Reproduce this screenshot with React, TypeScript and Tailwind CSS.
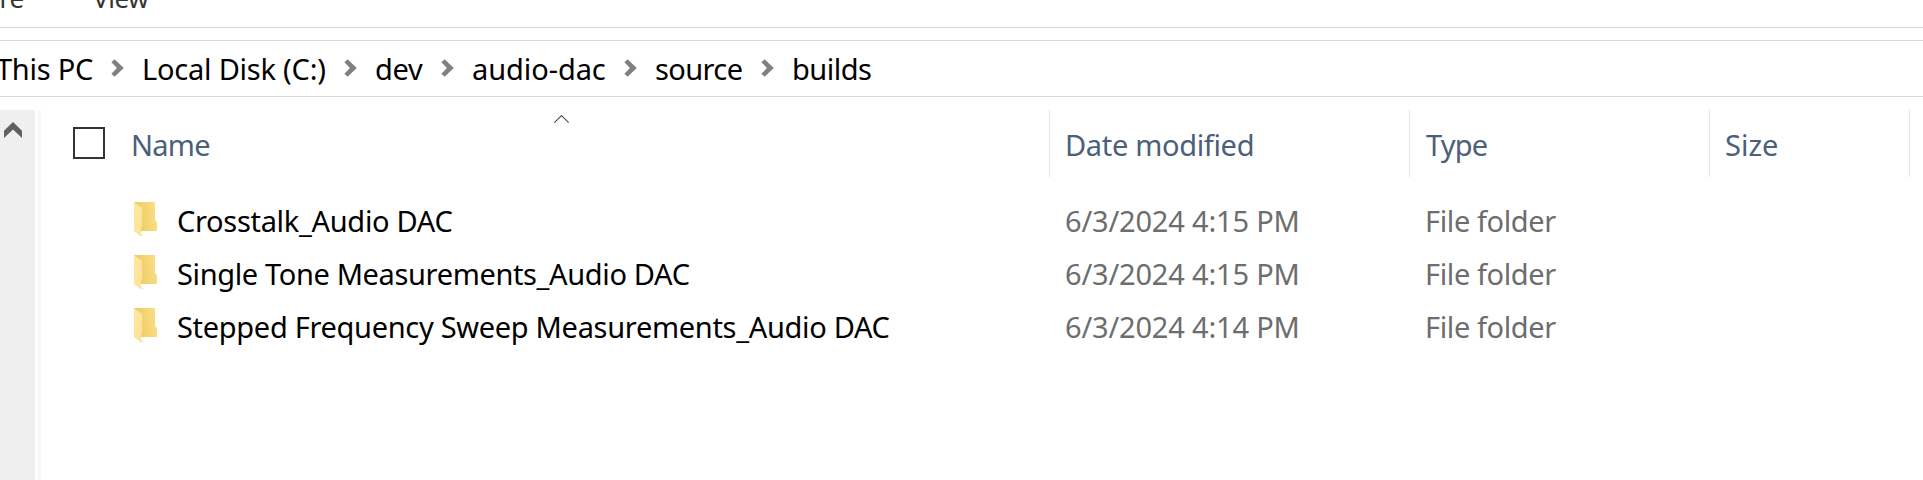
const crumbs = [
  { label: "This PC", box: "w-[115px] tracking-[-0.25px]" },
  { label: "Local Disk (C:)", box: "w-[202px] tracking-[-0.22px]" },
  { label: "dev", box: "w-[66px] tracking-[-0.3px]" },
  { label: "audio-dac", box: "w-[152px] tracking-[-0.08px]" },
  { label: "source", box: "w-[106px] tracking-[-0.6px]" },
  { label: "builds", box: "tracking-[-0.52px]" },
];

const rows = [
  { name: "Crosstalk_Audio DAC", spacing: "tracking-[-0.31px]", date: "6/3/2024 4:15 PM" },
  { name: "Single Tone Measurements_Audio DAC", spacing: "tracking-[-0.36px]", date: "6/3/2024 4:15 PM" },
  { name: "Stepped Frequency Sweep Measurements_Audio DAC", spacing: "tracking-[-0.31px]", date: "6/3/2024 4:14 PM" },
];

function CrumbArrow() {
  return (
    <svg className="h-[18px] w-[31px] shrink-0" viewBox="0 0 31 18">
      <path d="M0.4 3.2L3.6 0.2L12.8 9L3.6 17.8L0.4 14.8L5.9 9Z" fill="#808080" />
    </svg>
  );
}

function FolderIcon() {
  return (
    <svg className="h-[35px] w-6 shrink-0" viewBox="0 0 24 35">
      <defs>
        <linearGradient id="folder-back" x1="0" x2="1" y1="0.2" y2="0">
          <stop offset="0" stopColor="#ecca63" />
          <stop offset="1" stopColor="#fde087" />
        </linearGradient>
        <linearGradient id="folder-front" x1="0" x2="0.5" y1="0" y2="1">
          <stop offset="0" stopColor="#ffe8a4" />
          <stop offset="1" stopColor="#fee397" />
        </linearGradient>
      </defs>
      <path d="M7 34.6L11 33.6L7 32Z" fill="#f1ece0" />
      <path d="M0 0H21V18L23 20V29H0Z" fill="url(#folder-back)" />
      <path d="M0 0.3L8 6V25.5L7 26V34.5L0 29Z" fill="url(#folder-front)" />
    </svg>
  );
}

export default function App() {
  return (
    <div className="flex h-[480px] w-full flex-col overflow-hidden bg-white font-['Noto_Sans',sans-serif] text-[29px] whitespace-pre text-black">
      <div className="flex h-7 shrink-0 border-b border-[#d9d9d9] text-[26px] leading-[36px] text-[#333]">
        <div className="-mt-5 flex w-6 shrink-0 justify-end tracking-[-0.2px]">Share</div>
        <div className="-mt-5 pl-[69px] tracking-[-0.4px]">View</div>
      </div>

      <div className="mt-3 flex h-[57px] shrink-0 border-y border-[#d9d9d9] leading-[55px]">
        <div className="-ml-1 flex">
          {crumbs.map((c, i) => (
            <div key={c.label} className="flex">
              <span className={c.box}>{c.label}</span>
              {i < crumbs.length - 1 && (
                <div className="pt-[17.5px]">
                  <CrumbArrow />
                </div>
              )}
            </div>
          ))}
        </div>
      </div>

      <div className="mt-[13px] flex min-h-0 flex-1">
        <div className="w-[35px] shrink-0 bg-[#efefef] pt-3 pl-1">
          <svg className="h-4 w-[18px]" viewBox="0 0 18 16">
            <path d="M9 0L18 8.8V16L9 7.4L0 16V8.8Z" fill="#606060" />
          </svg>
        </div>
        <div className="ml-[3px] w-[3px] shrink-0 bg-[#f7f7f7]" />

        <div className="flex min-w-0 flex-1 flex-col">
          <div className="flex h-[67px] shrink-0 leading-[69px] text-[#4c607a]">
            <div className="relative flex w-[1009px] shrink-0 border-r border-[#e5e5e5] pl-8">
              <div className="mt-[17px] size-8 border-2 border-[#333]" />
              <span className="ml-[26px] tracking-[-0.75px]">Name</span>
              <svg className="absolute top-[5px] left-[513px] h-2 w-[15px]" viewBox="0 0 15 8">
                <path d="M0.3 7.6L7.5 0.7L14.7 7.6" fill="none" stroke="#444" strokeWidth="1.1" />
              </svg>
            </div>
            <div className="w-[360px] shrink-0 border-r border-[#e5e5e5] pl-[15px] tracking-[-0.33px]">Date modified</div>
            <div className="w-[300px] shrink-0 border-r border-[#e5e5e5] pl-4 tracking-[-0.8px]">Type</div>
            <div className="w-[200px] shrink-0 border-r border-[#e5e5e5] pl-[15px]">Size</div>
          </div>

          <div className="mt-[17px] flex flex-col">
            {rows.map((r) => (
              <div key={r.name} className="flex h-[53px] leading-[53px] text-[#6d6d6d]">
                <div className="flex w-[1024px] shrink-0 pl-[93px] text-black">
                  <div className="pt-2">
                    <FolderIcon />
                  </div>
                  <span className={`ml-[19px] ${r.spacing}`}>{r.name}</span>
                </div>
                <div className="w-[360px] shrink-0 tracking-[-0.18px]">{r.date}</div>
                <div className="tracking-[-0.38px]">File folder</div>
              </div>
            ))}
          </div>
        </div>
      </div>
    </div>
  );
}
